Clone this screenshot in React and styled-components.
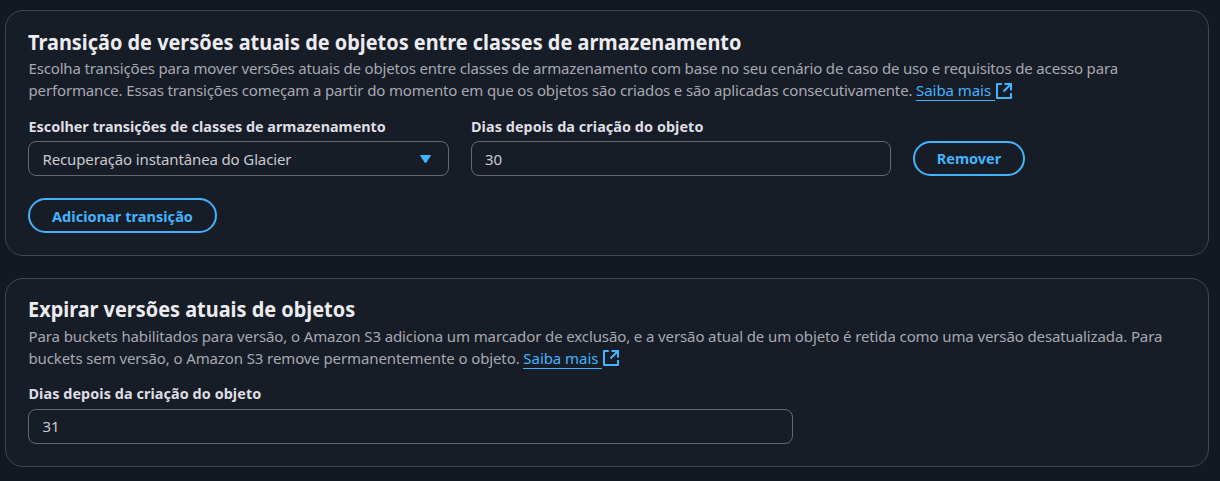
import React from "react";
import styled, { createGlobalStyle } from "styled-components";

const GlobalStyle = createGlobalStyle`
  *, *::before, *::after { box-sizing: border-box; }
  html, body { margin: 0; background: #131920; }
  body {
    height: 481px;
    overflow: hidden;
    font-family: "Noto Sans", "Open Sans", sans-serif;
    font-size: 15px;
    line-height: 22px;
    color: #cacad1;
  }
`;

const Page = styled.main`
  display: flex;
  flex-direction: column;
  gap: 22px;
  padding: 10px 11px 0 5px;
`;

const Panel = styled.section`
  height: ${(p) => p.$height}px;
  border: 1px solid #424650;
  border-radius: 18px;
  background: #171d26;
  padding: ${(p) => p.$top}px 22px 0;
`;

const Title = styled.h2`
  margin: 0 0 ${(p) => p.$gap}px 0.3px;
  font-size: 22px;
  font-weight: 700;
  line-height: 28px;
  white-space: nowrap;
  transform: scaleX(0.904);
  transform-origin: left;
  color: #ebebf0;
`;

const Description = styled.p`
  margin: 0 0 0 0.5px;
  color: #a8a8b1;
`;

const Line = styled.span`
  display: block;
  height: 22px;
  white-space: nowrap;
  letter-spacing: ${(p) => p.$spacing || 0}px;
`;

const Link = styled.a`
  display: inline-flex;
  color: #42b4ff;
  letter-spacing: -0.06px;
`;

const LinkText = styled.span`
  height: 22px;
  white-space: pre;
  border-bottom: 1px solid #42b4ff;
`;

const ExternalSvg = styled.svg`
  width: 18px;
  height: 18px;
  margin-top: ${(p) => p.$top}px;
`;

const Fields = styled.div`
  display: flex;
  align-items: flex-end;
  gap: 22px;
  margin-top: ${(p) => p.$top}px;
`;

const Field = styled.label`
  display: flex;
  flex-direction: column;
  gap: ${(p) => p.$gap || 3}px;
  width: ${(p) => p.$width}px;
`;

const Label = styled.span`
  padding-left: ${(p) => p.$indent || 0}px;
  font-size: 14.4px;
  font-weight: 700;
  white-space: nowrap;
  letter-spacing: ${(p) => p.$spacing || 0}px;
  color: #dedee3;
`;

const Control = styled.span`
  display: flex;
  align-items: center;
  justify-content: space-between;
  height: 35px;
  padding: ${(p) => (p.$raised ? "0 16px 1px" : "1px 16px 0")};
  padding-left: ${(p) => p.$indent || 13}px;
  border: 1px solid #656871;
  border-radius: 8px;
  letter-spacing: ${(p) => p.$spacing || 0}px;
`;

const Caret = styled.svg`
  width: 13px;
  height: 11px;
  margin-top: 1px;
`;

const Button = styled.button`
  width: ${(p) => p.$width}px;
  height: 35px;
  margin: ${(p) => p.$top || 0}px 0 0;
  padding: ${(p) => p.$insetTop || 0}px 0 ${(p) => p.$insetBottom || 0}px;
  border: 2px solid #42b4ff;
  border-radius: 18px;
  background: transparent;
  color: #42b4ff;
  font-family: inherit;
  font-size: 14.5px;
  font-weight: 700;
  line-height: 22px;
  white-space: nowrap;
  letter-spacing: ${(p) => p.$spacing || 0}px;
`;

function LearnMore({ iconTop }) {
  return (
    <Link>
      <LinkText>{"Saiba mais "}</LinkText>
      <ExternalSvg $top={iconTop} viewBox="0 0 18 18" fill="none" stroke="#42b4ff" strokeWidth="2">
        <path d="M6.8 2H2v14h14v-5" strokeLinejoin="round" />
        <path d="M9.5 2H16v6.5M16 2 8.5 9.5" />
      </ExternalSvg>
    </Link>
  );
}

export default function App() {
  return (
    <>
      <GlobalStyle />
      <Page>
        <Panel $height={246} $top={16}>
          <Title $gap={2}>Transição de versões atuais de objetos entre classes de armazenamento</Title>
          <Description>
            <Line $spacing={-0.167}>
              Escolha transições para mover versões atuais de objetos entre classes de armazenamento com base no seu cenário de caso de uso e requisitos de acesso para
            </Line>
            <Line $spacing={-0.146}>
              performance. Essas transições começam a partir do momento em que os objetos são criados e são aplicadas consecutivamente. <LearnMore iconTop={3} />
            </Line>
          </Description>
          <Fields $top={15}>
            <Field $width={421}>
              <Label $indent={0.5} $spacing={-0.01}>Escolher transições de classes de armazenamento</Label>
              <Control $indent={13.5} $spacing={-0.13}>
                Recuperação instantânea do Glacier
                <Caret viewBox="0 0 13 11">
                  <path d="M1.5 1.5h10L6.5 9z" fill="#42b4ff" stroke="#42b4ff" strokeWidth="1" strokeLinejoin="round" />
                </Caret>
              </Control>
            </Field>
            <Field $width={420}>
              <Label $spacing={0.06}>Dias depois da criação do objeto</Label>
              <Control>30</Control>
            </Field>
            <Button $width={112} $insetBottom={2}>Remover</Button>
          </Fields>
          <Button $width={189} $top={22} $insetTop={1} $spacing={0.04}>Adicionar transição</Button>
        </Panel>
        <Panel $height={189} $top={15}>
          <Title $gap={3}>Expirar versões atuais de objetos</Title>
          <Description>
            <Line $spacing={-0.114}>
              Para buckets habilitados para versão, o Amazon S3 adiciona um marcador de exclusão, e a versão atual de um objeto é retida como uma versão desatualizada. Para
            </Line>
            <Line $spacing={-0.11}>
              buckets sem versão, o Amazon S3 remove permanentemente o objeto. <LearnMore iconTop={2} />
            </Line>
          </Description>
          <Fields $top={14}>
            <Field $width={765} $gap={4}>
              <Label $indent={0.5} $spacing={0.07}>Dias depois da criação do objeto</Label>
              <Control $indent={13.5} $raised>31</Control>
            </Field>
          </Fields>
        </Panel>
      </Page>
    </>
  );
}
